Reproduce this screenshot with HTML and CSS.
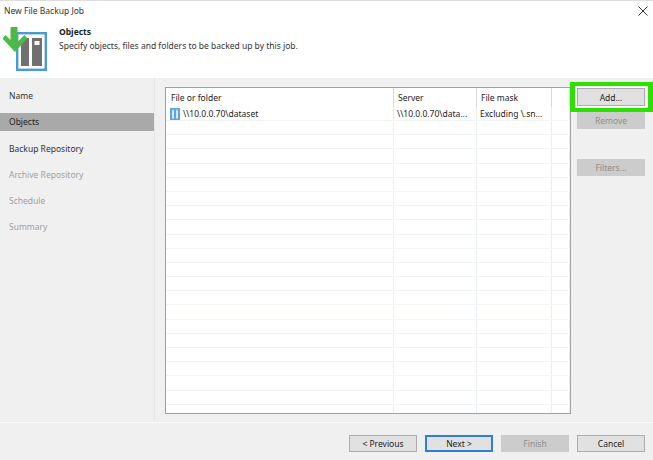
FILE: index.html
```html
<!DOCTYPE html>
<html lang="en">
<head>
<meta charset="utf-8">
<title>New File Backup Job</title>
<link rel="stylesheet" href="styles.css">
</head>
<body>
<div class="window">
  <header class="top">
    <div class="titlebar">
      <span class="title">New File Backup Job</span>
      <svg class="close" width="10" height="10" viewBox="0 0 10 10"><path d="M.5.5l9 9M9.500.5l-9 9" stroke="#333" fill="none"/></svg>
    </div>
    <div class="banner">
      <svg class="logo" width="48" height="48" viewBox="0 0 48 48">
        <rect x="16.200" y="9.200" width="28.600" height="36.600" fill="#fff" stroke="#4a9bd4" stroke-width="2.400"/>
        <rect x="20" y="14" width="8" height="28" fill="#707070"/>
        <rect x="31" y="14" width="10" height="28" fill="#707070"/>
        <rect x="33.500" y="17" width="5" height="4" fill="#fff"/>
        <path d="M9.500 3h7v15l7-7 3 3.500L14 28 1.500 14.500l3-3.500 5 5z" fill="#4cb848"/>
      </svg>
      <div class="banner-text">
        <div class="banner-title">Objects</div>
        <div class="banner-sub">Specify objects, files and folders to be backed up by this job.</div>
      </div>
    </div>
  </header>
  <div class="main">
    <nav class="steps">
      <div class="step active-text">Name</div>
      <div class="step current">Objects</div>
      <div class="step active-text">Backup Repository</div>
      <div class="step">Archive Repository</div>
      <div class="step">Schedule</div>
      <div class="step">Summary</div>
    </nav>
    <section class="content">
      <div class="table">
        <div class="row head">
          <div class="cell">File or folder</div>
          <div class="cell">Server</div>
          <div class="cell">File mask</div>
          <div class="cell"></div>
        </div>
        <div class="row item">
          <div class="cell">
            <svg class="share" width="10" height="12" viewBox="0 0 10 12"><rect width="10" height="12" fill="#5ba6da"/><rect x="2" y="2.500" width="2" height="8" fill="#d9eaf7"/><rect x="6" y="2.500" width="2" height="8" fill="#d9eaf7"/><rect x="2.500" y="1.500" width="1" height="1" fill="#fff"/><rect x="6.500" y="1.500" width="1" height="1" fill="#fff"/></svg>
            <span>\\10.0.0.70\dataset</span>
          </div>
          <div class="cell">\\10.0.0.70\data...</div>
          <div class="cell">Excluding \.sn...</div>
          <div class="cell"></div>
        </div>
        <div class="row"><div class="cell"></div><div class="cell"></div><div class="cell"></div><div class="cell"></div></div>
        <div class="row"><div class="cell"></div><div class="cell"></div><div class="cell"></div><div class="cell"></div></div>
        <div class="row"><div class="cell"></div><div class="cell"></div><div class="cell"></div><div class="cell"></div></div>
        <div class="row"><div class="cell"></div><div class="cell"></div><div class="cell"></div><div class="cell"></div></div>
        <div class="row"><div class="cell"></div><div class="cell"></div><div class="cell"></div><div class="cell"></div></div>
        <div class="row"><div class="cell"></div><div class="cell"></div><div class="cell"></div><div class="cell"></div></div>
        <div class="row"><div class="cell"></div><div class="cell"></div><div class="cell"></div><div class="cell"></div></div>
        <div class="row"><div class="cell"></div><div class="cell"></div><div class="cell"></div><div class="cell"></div></div>
        <div class="row"><div class="cell"></div><div class="cell"></div><div class="cell"></div><div class="cell"></div></div>
        <div class="row"><div class="cell"></div><div class="cell"></div><div class="cell"></div><div class="cell"></div></div>
        <div class="row"><div class="cell"></div><div class="cell"></div><div class="cell"></div><div class="cell"></div></div>
        <div class="row"><div class="cell"></div><div class="cell"></div><div class="cell"></div><div class="cell"></div></div>
        <div class="row"><div class="cell"></div><div class="cell"></div><div class="cell"></div><div class="cell"></div></div>
        <div class="row"><div class="cell"></div><div class="cell"></div><div class="cell"></div><div class="cell"></div></div>
        <div class="row"><div class="cell"></div><div class="cell"></div><div class="cell"></div><div class="cell"></div></div>
        <div class="row"><div class="cell"></div><div class="cell"></div><div class="cell"></div><div class="cell"></div></div>
        <div class="row"><div class="cell"></div><div class="cell"></div><div class="cell"></div><div class="cell"></div></div>
        <div class="row"><div class="cell"></div><div class="cell"></div><div class="cell"></div><div class="cell"></div></div>
        <div class="row"><div class="cell"></div><div class="cell"></div><div class="cell"></div><div class="cell"></div></div>
        <div class="row"><div class="cell"></div><div class="cell"></div><div class="cell"></div><div class="cell"></div></div>
        <div class="row"><div class="cell"></div><div class="cell"></div><div class="cell"></div><div class="cell"></div></div>
      </div>
      <div class="side-buttons">
        <div class="highlight"></div>
        <button class="btn add">Add...</button>
        <button class="btn off">Remove</button>
        <button class="btn off filters">Filters...</button>
      </div>
    </section>
  </div>
  <footer class="footer">
    <button class="btn wide">&lt; Previous</button>
    <button class="btn wide primary">Next &gt;</button>
    <button class="btn wide off">Finish</button>
    <button class="btn wide">Cancel</button>
  </footer>
</div>
</body>
</html>
```
FILE: styles.css
```css
* { box-sizing: border-box; }
html, body { margin: 0; padding: 0; }
body {
  width: 653px;
  height: 460px;
  overflow: hidden;
  font-family: "Noto Sans", "Open Sans", sans-serif;
  font-size: 8.5px;
  color: #222;
  background: #f0f0f0;
}
.window { display: flex; flex-direction: column; height: 460px; }

.top { height: 78px; background: #fff; border-top: 1px solid #ddd; }
.titlebar {
  height: 18px;
  padding: 1px 5px 0 4px;
  display: flex;
  justify-content: space-between;
  align-items: center;
}
.title { color: #333; }
.banner { display: flex; padding-left: 1px; }
.logo { flex: none; margin-top: 5px; }
.banner-text { margin-left: 10px; margin-top: 6px; }
.banner-title { font-weight: 700; line-height: 14px; color: #222; }
.banner-sub { line-height: 13px; color: #333; }

.main { flex: 1; display: flex; min-height: 0; }
.steps { width: 154px; flex: none; padding-top: 9px; }
.step {
  height: 18px;
  margin-bottom: 8px;
  padding-left: 9px;
  line-height: 18px;
  color: #a0a0a0;
}
.step.active-text { color: #333; }
.step.current { background: #a9a9a9; color: #222; margin-bottom: 9px; }

.content {
  flex: 1;
  display: flex;
  align-items: flex-start;
  padding: 9px 0 0 10px;
  border-left: 1px solid #e6e6e6;
}
.table {
  width: 406px;
  height: 327px;
  flex: none;
  background: #fff;
  border: 1px solid #a0a0a0;
  overflow: hidden;
}
.row {
  display: grid;
  grid-template-columns: 228px 83px 75px 1fr;
  height: 14.2px;
  border-bottom: 1px solid #f0f4f8;
}
.row.head { height: 19px; border-bottom: 0; }
.row.item { height: 14px; }
.cell {
  padding-left: 5px;
  border-right: 1px solid #ebeff3;
  white-space: nowrap;
  overflow: hidden;
  line-height: 14px;
  color: #222;
}
.row.head .cell { line-height: 20px; border-right-color: #d8d8d8; }
.row.head .cell + .cell { padding-left: 4px; }
.row.item .cell { display: flex; align-items: center; gap: 3px; padding-left: 4px; }
.row.item .cell + .cell { padding-left: 3px; }
.share { flex: none; }

.side-buttons {
  position: relative;
  margin-left: 6px;
  width: 68px;
  display: flex;
  flex-direction: column;
  gap: 6px;
  padding-top: 1px;
}
.highlight {
  position: absolute;
  left: -7px;
  top: -5px;
  width: 83px;
  height: 30px;
  border-style: solid;
  border-color: #2ee000;
  border-width: 4px 5px;
  box-shadow: inset 0 0 0 2px #fff;
}
.btn {
  height: 17px;
  padding: 0;
  font: inherit;
  color: #222;
  background: #e1e1e1;
  border: 1px solid #adadad;
}
.side-buttons .btn { width: 68px; }
.btn.add { height: 18px; position: relative; }
.btn.off { background: #cccccc; border-color: #cccccc; color: #8c8c8c; }
.btn.filters { margin-top: 24px; }

.footer {
  height: 38px;
  flex: none;
  display: flex;
  justify-content: flex-end;
  align-items: flex-start;
  gap: 8px;
  padding: 12px 8px 0 0;
  border-top: 1px solid #f8f8f8;
}
.btn.wide { width: 68px; }
.btn.primary { border: 2px solid #2f80d0; }
```
